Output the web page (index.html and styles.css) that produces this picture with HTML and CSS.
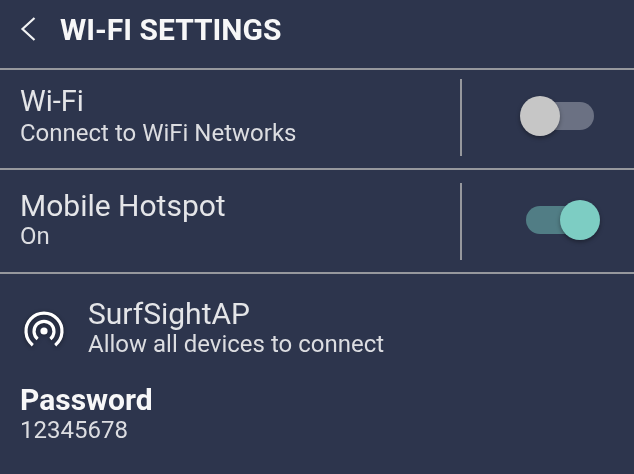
FILE: index.html
```html
<!DOCTYPE html>
<html lang="en">
<head>
    <meta charset="UTF-8">
    <title>Wi-Fi Settings</title>
    <link rel="stylesheet" href="styles.css">
</head>
<body>
    <div class="screen">
        <header class="top-bar">
            <svg class="back-icon" width="16" height="26" viewBox="0 0 16 26">
                <path d="M14.5 2 L2.5 13 L14.5 24" fill="none" stroke="#f2f3f4" stroke-width="2.2"/>
            </svg>
            <h1>WI-FI SETTINGS</h1>
        </header>

        <section class="row row-wifi">
            <div class="row-text">
                <div class="row-title">Wi-Fi</div>
                <div class="row-sub">Connect to WiFi Networks</div>
            </div>
            <div class="row-control">
                <div class="toggle off"><span class="knob"></span></div>
            </div>
        </section>

        <section class="row row-hotspot">
            <div class="row-text">
                <div class="row-title">Mobile Hotspot</div>
                <div class="row-sub">On</div>
            </div>
            <div class="row-control">
                <div class="toggle on"><span class="knob"></span></div>
            </div>
        </section>

        <section class="hotspot-info">
            <svg class="ap-icon" width="44" height="44" viewBox="0 0 44 44">
                <circle cx="22" cy="22" r="3.6" fill="#fff"/>
                <path d="M15.6 30 A10 10 0 1 1 28.4 30" fill="none" stroke="#fff" stroke-width="3.2"/>
                <path d="M10.8 36.2 A18 18 0 1 1 33.2 36.2" fill="none" stroke="#fff" stroke-width="3.2"/>
            </svg>
            <div class="ap-text">
                <div class="ap-name">SurfSightAP</div>
                <div class="row-sub">Allow all devices to connect</div>
            </div>
        </section>

        <section class="password">
            <div class="password-label">Password</div>
            <div class="row-sub">12345678</div>
        </section>
    </div>
</body>
</html>
```

FILE: styles.css
```css
html, body {
    margin: 0;
    padding: 0;
}
body {
    background: #2d354d;
    font-family: Roboto, "Liberation Sans", sans-serif;
    color: #e4e5e8;
}
.screen {
    width: 634px;
    height: 474px;
    overflow: hidden;
    filter: blur(0.5px);
}
.top-bar {
    display: flex;
    align-items: center;
    gap: 24px;
    box-sizing: border-box;
    height: 70px;
    padding: 0 0 10px 20px;
    border-bottom: 2px solid #96989d;
}
.top-bar h1 {
    margin: 0;
    font-size: 30px;
    font-weight: 700;
    color: #f7f7f8;
}
.back-icon {
    flex: none;
}
.row {
    display: flex;
    box-sizing: border-box;
    border-bottom: 2px solid #96989d;
}
.row-wifi {
    height: 100px;
    padding-top: 9px;
}
.row-hotspot {
    height: 104px;
    padding-top: 13px;
}
.row-text {
    flex: 1;
    padding-left: 20px;
}
.row-wifi .row-text {
    padding-top: 5px;
}
.row-hotspot .row-text {
    padding-top: 7px;
}
.row-title {
    font-size: 30px;
    line-height: 32px;
}
.row-wifi .row-title {
    font-size: 29px;
    line-height: 35px;
}
.row-sub {
    font-size: 24px;
    line-height: 28px;
    color: #dcdde1;
}
.row-control {
    display: flex;
    align-items: center;
    justify-content: center;
    box-sizing: border-box;
    width: 174px;
    height: 77px;
    padding: 0 0 3px 24px;
    border-left: 2px solid #96989d;
}
.toggle {
    position: relative;
    width: 68px;
    height: 28px;
    border-radius: 14px;
}
.toggle.off {
    background: #6b7183;
}
.toggle.on {
    background: #517d85;
}
.knob {
    position: absolute;
    top: -6px;
    width: 40px;
    height: 40px;
    border-radius: 50%;
    box-shadow: 0 2px 4px rgba(0,0,0,0.35);
}
.toggle.off .knob {
    left: -6px;
    background: #c6c6c6;
}
.toggle.on .knob {
    right: -6px;
    background: #7dcdc3;
}
.hotspot-info {
    display: flex;
    align-items: center;
    gap: 22px;
    padding: 24px 0 0 22px;
}
.ap-icon {
    flex: none;
    margin-top: 6px;
    filter: drop-shadow(0 1px 2px rgba(0,0,0,0.4));
}
.ap-name {
    font-size: 30px;
    line-height: 32px;
}
.password {
    padding: 26px 0 0 20px;
}
.password-label {
    font-size: 30px;
    line-height: 32px;
    font-weight: 700;
    color: #f7f7f8;
}
```
